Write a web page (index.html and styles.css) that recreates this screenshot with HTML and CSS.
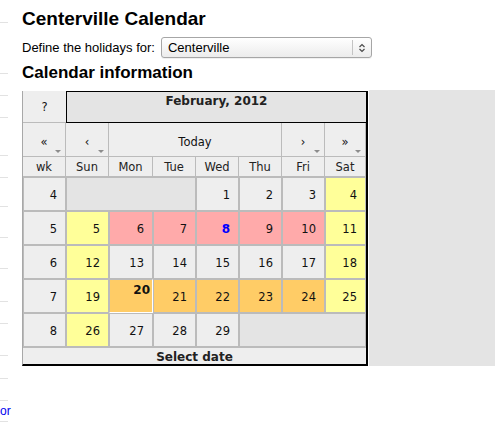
FILE: index.html
```html
<!DOCTYPE html>
<html>
<head>
<meta charset="utf-8">
<link rel="stylesheet" href="styles.css">
</head>
<body>
<div class="page">
  <div class="side">
    <div class="si h22"></div>
    <div class="si h50"></div>
    <div class="si h21"></div>
    <div class="si h21"></div>
    <div class="si h37"></div>
    <div class="si h21"></div>
    <div class="si h28"></div>
    <div class="si h30"></div>
    <div class="si h30"></div>
    <div class="si h32"></div>
    <div class="si h21"></div>
    <div class="si h31"></div>
    <div class="si h22"></div>
    <div class="si h21"></div>
    <div class="si h20 link"><a>or</a></div>
  </div>
  <div class="main">
    <h1>Centerville Calendar</h1>
    <div class="define">
      <span class="label">Define the holidays for:</span>
      <div class="select">
        <span class="sel-text">Centerville</span>
        <span class="sel-btn">
          <svg width="8" height="10" viewBox="0 0 8 10"><path d="M1.5 4 L4 1.5 L6.5 4 M1.5 6 L4 8.5 L6.5 6" fill="none" stroke="#4a4a4a" stroke-width="1.2"/></svg>
        </span>
      </div>
    </div>
    <h2>Calendar information</h2>
    <div class="calrow">
      <div class="cal">
        <div class="c help">?</div>
        <div class="c title">February, 2012</div>

        <div class="c nav btn">«</div>
        <div class="c nav btn">‹</div>
        <div class="c nav todaybtn">Today</div>
        <div class="c nav btn">›</div>
        <div class="c nav btn">»</div>

        <div class="c name">wk</div>
        <div class="c name">Sun</div>
        <div class="c name">Mon</div>
        <div class="c name">Tue</div>
        <div class="c name">Wed</div>
        <div class="c name">Thu</div>
        <div class="c name">Fri</div>
        <div class="c name">Sat</div>

        <div class="c d">4</div>
        <div class="c empty span3"></div>
        <div class="c d">1</div>
        <div class="c d">2</div>
        <div class="c d">3</div>
        <div class="c d we">4</div>

        <div class="c d">5</div>
        <div class="c d we">5</div>
        <div class="c d hol">6</div>
        <div class="c d hol">7</div>
        <div class="c d hol sel">8</div>
        <div class="c d hol">9</div>
        <div class="c d hol">10</div>
        <div class="c d we">11</div>

        <div class="c d">6</div>
        <div class="c d we">12</div>
        <div class="c d">13</div>
        <div class="c d">14</div>
        <div class="c d">15</div>
        <div class="c d">16</div>
        <div class="c d">17</div>
        <div class="c d we">18</div>

        <div class="c d">7</div>
        <div class="c d we">19</div>
        <div class="c d range today">20</div>
        <div class="c d range">21</div>
        <div class="c d range">22</div>
        <div class="c d range">23</div>
        <div class="c d range">24</div>
        <div class="c d we">25</div>

        <div class="c d">8</div>
        <div class="c d we">26</div>
        <div class="c d">27</div>
        <div class="c d">28</div>
        <div class="c d">29</div>
        <div class="c empty span3"></div>

        <div class="c foot">Select date</div>
      </div>
      <div class="panel"></div>
    </div>
  </div>
</div>
</body>
</html>
```
FILE: styles.css
```css
html, body {
  margin: 0;
  padding: 0;
  background: #fff;
}

.page {
  display: flex;
  align-items: flex-start;
  font-family: "Liberation Sans", Arial, sans-serif;
  color: #000;
}

.side {
  width: 8px;
  flex: none;
}

.si {
  border-bottom: 1px solid #e2e2e2;
}

.h20 { height: 20px; }
.h21 { height: 21px; }
.h22 { height: 22px; }
.h28 { height: 28px; }
.h30 { height: 30px; }
.h31 { height: 31px; }
.h32 { height: 32px; }
.h37 { height: 37px; }
.h50 { height: 50px; }

.link {
  display: flex;
  align-items: center;
  font-size: 12px;
  white-space: nowrap;
}

.link a {
  color: #0000ee;
  flex: none;
}

.main {
  flex: 1;
  min-width: 0;
  margin-left: 14px;
  padding-top: 8px;
}

h1 {
  margin: 0;
  font-size: 19px;
  line-height: 22px;
  font-weight: bold;
}

.define {
  display: flex;
  align-items: center;
  margin-top: 7px;
  height: 21px;
  gap: 6px;
  font-size: 13px;
}

.select {
  box-sizing: border-box;
  width: 211px;
  height: 21px;
  display: flex;
  align-items: center;
  border: 1px solid #a6a6a6;
  border-radius: 3px;
  background: linear-gradient(#ffffff, #ececec);
  box-shadow: 0 1px 0 rgba(0,0,0,0.06);
}

.sel-text {
  flex: 1;
  padding-left: 6px;
  font-size: 13px;
}

.sel-btn {
  width: 18px;
  height: 15px;
  border-left: 1px solid #c4c4c4;
  display: flex;
  align-items: center;
  justify-content: center;
}

h2 {
  margin: 5px 0 0 0;
  font-size: 17px;
  line-height: 20px;
  font-weight: bold;
}

.calrow {
  display: flex;
  margin-top: 7px;
}

.cal {
  margin-top: 1px;
  display: grid;
  grid-template-columns: 43px 43px 44px 43px 43px 43px 43px 41px;
  grid-template-rows: 32px 34px 20px 34px 34px 34px 34px 34px 17px;
  border-left: 1px solid #a8a8a8;
  border-right: 2px solid #000;
  border-bottom: 2px solid #000;
  font-family: "DejaVu Sans", Verdana, sans-serif;
  font-size: 11.5px;
  color: #111;
  flex: none;
}

.c {
  box-sizing: border-box;
  background: #eeeeee;
  display: flex;
  align-items: center;
  justify-content: center;
}

.help {
  border-bottom: 1px solid #bbbbbb;
  padding-top: 1px;
}

.title {
  grid-column: span 7;
  background: #e4e4e4;
  border: 1px solid #000;
  border-right: 0;
  align-items: flex-start;
  padding-top: 2px;
  font-size: 12px;
  line-height: 14px;
  font-weight: bold;
  color: #222;
}

.nav {
  position: relative;
  border-right: 1px solid #bbbbbb;
  border-bottom: 1px solid #bbbbbb;
  padding-top: 4px;
}

.nav:last-child { border-right: 0; }

.todaybtn {
  grid-column: span 4;
}

.btn::after {
  content: "";
  position: absolute;
  right: 4px;
  bottom: 3px;
  border-left: 3px solid transparent;
  border-right: 3px solid transparent;
  border-top: 3px solid #8c8c8c;
}

.name {
  border-right: 1px solid #bbbbbb;
  border-bottom: 1px solid #bbbbbb;
  color: #222;
}

.d {
  border: 1px solid #bbbbbb;
  justify-content: flex-end;
  padding-right: 8px;
  padding-top: 1px;
}

.empty {
  background: #e4e4e4;
  border: 1px solid #bbbbbb;
}

.span3 {
  grid-column: span 3;
}

.we {
  background: #ffff99;
}

.hol {
  background: #ffaaaa;
}

.range {
  background: #ffcc66;
}

.sel {
  color: #0000ff;
  font-weight: bold;
  font-size: 12px;
}

.today {
  font-weight: bold;
  font-size: 12px;
  align-items: flex-start;
  padding-top: 3px;
  padding-right: 2px;
  border-color: #bbbbbb #ffffff #ffffff #bbbbbb;
  line-height: 14px;
}

.foot {
  grid-column: span 8;
  border-top: 1px solid #bbbbbb;
  font-weight: bold;
  font-size: 12px;
  line-height: 14px;
  color: #222;
  padding-top: 1px;
}

.panel {
  flex: 1;
  margin-left: 1px;
  background: #e4e4e4;
}
```
